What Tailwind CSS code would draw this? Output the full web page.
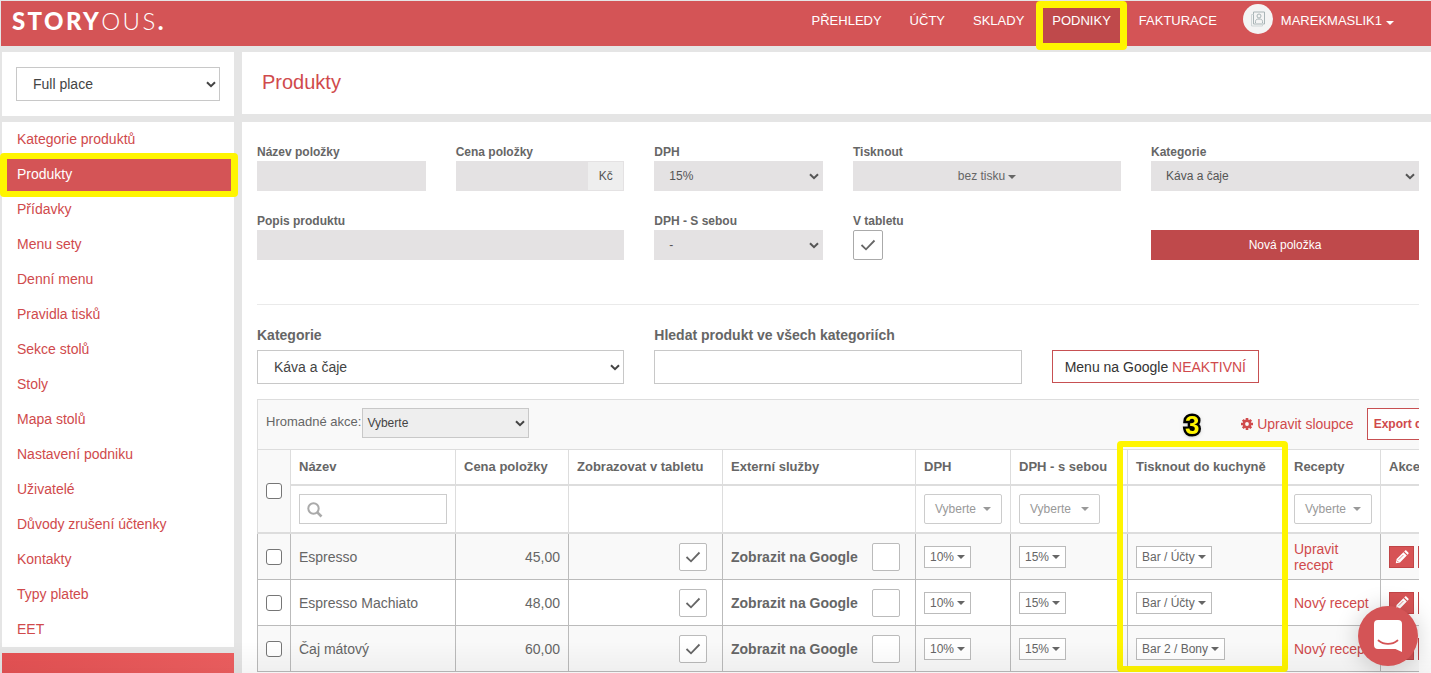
<!DOCTYPE html>
<html lang="cs">
<head>
<meta charset="utf-8">
<meta name="viewport" content="width=device-width, initial-scale=1">
<title>Storyous – Produkty</title>
<script src="https://cdn.jsdelivr.net/npm/@tailwindcss/browser@4"></script>
</head>
<body class="flex h-screen flex-col overflow-hidden bg-[#e5e5e5] font-['Liberation_Sans',Arial,sans-serif] text-[14px] leading-4 text-[#666]">

<svg class="hidden" aria-hidden="true">
  <symbol id="chevron" viewBox="0 0 10 7"><path d="M1 1.2 5 5.2 9 1.2" fill="none" stroke="currentColor" stroke-width="2"/></symbol>
  <symbol id="caret" viewBox="0 0 8 4"><path d="M0 0h8L4 4z" fill="currentColor"/></symbol>
  <symbol id="check" viewBox="0 0 16 12"><path d="M1.5 6 6 10.3 14.5 1.5" fill="none" stroke="currentColor" stroke-width="1.8"/></symbol>
  <symbol id="pencil" viewBox="0 0 14 14"><path d="M.8 13.200l.8-4.200 6.800-6.800 3.400 3.400-6.800 6.800zM9.200 1.400l.7-.7c.5-.5 1.100-.5 1.600 0l1.800 1.800c.5.500.5 1.100 0 1.600l-.7.7z" fill="currentColor"/><path d="M3.600 9.800 8.400 5" stroke="#d75355" stroke-width=".7"/><path d="M2 10.700l1.300 1.300" stroke="#d75355" stroke-width=".8"/></symbol>
</svg>

<header class="mt-px ml-px flex h-[45px] shrink-0 items-start justify-between bg-[#d45456] pr-[37px] pl-[11px] text-white">
  <a href="#" class="mt-1 font-[Lato,sans-serif] text-[24px] leading-8 font-black tracking-widest">STORY<span class="font-light">OUS</span>.</a>
  <nav class="flex items-start text-[13px] leading-4">
    <a href="#" class="px-[14px] pt-[12px]">PŘEHLEDY</a>
    <a href="#" class="px-[14px] pt-[12px]">ÚČTY</a>
    <a href="#" class="px-[14px] pt-[12px]">SKLADY</a>
    <a href="#" aria-current="page" class="relative h-[45px] bg-[#bf494b] px-[14px] pt-[12px]">PODNIKY
      <span class="absolute -inset-x-[2px] top-0 -bottom-1 z-10 rounded-sm border-[7px] border-[#fff500]"></span>
    </a>
    <a href="#" class="px-[14px] pt-[12px]">FAKTURACE</a>
    <button type="button" class="ml-3 flex items-start pt-[3px]">
      <span class="mr-2 flex size-[30px] items-center justify-center rounded-full bg-[#f4f4f4]">
        <svg class="size-4" viewBox="0 0 16 16" fill="none" stroke="#a9b4b6"><path d="M3.500 1h11v12h-11z" stroke-width="1"/><path d="M3.500 3.500H1.500V15h11v-2" stroke="#cfd6d7"/><circle cx="9" cy="5" r="2"/><path d="M5.500 12V10.500c0-1.800 1.300-2.500 3.500-2.500s3.500.7 3.500 2.500V12"/></svg>
      </span>
      <span class="flex items-center gap-1 pt-[9px]">MAREKMASLIK1 <svg class="mt-1 h-1 w-2"><use href="#caret"/></svg></span>
    </button>
  </nav>
</header>

<div class="flex min-h-0 flex-1 gap-2 pt-[6px] pl-[2px]">
  <aside class="flex w-[232px] shrink-0 flex-col">
    <div class="bg-white px-[14px] py-[15px]">
      <div class="relative">
        <select aria-label="Podnik" class="block h-[34px] w-full appearance-none border border-[#c8c8c8] bg-white pl-4 text-[14px] text-[#444]"><option>Full place</option></select>
        <svg class="pointer-events-none absolute top-[14px] right-1 h-[7px] w-[10px] text-[#444]"><use href="#chevron"/></svg>
      </div>
    </div>
    <nav class="mt-[6px] bg-white leading-[35px] text-[#d04a4c]">
      <a href="#" class="block pl-[15px]">Kategorie produktů</a>
      <a href="#" aria-current="page" class="relative block bg-[#d45456] pl-[15px] text-white">Produkty
        <span class="absolute -top-1 -right-1 -bottom-[5px] -left-[2px] z-10 rounded-sm border-x-[7px] border-y-6 border-[#fff500]"></span>
      </a>
      <a href="#" class="block pl-[15px]">Přídavky</a>
      <a href="#" class="block pl-[15px]">Menu sety</a>
      <a href="#" class="block pl-[15px]">Denní menu</a>
      <a href="#" class="block pl-[15px]">Pravidla tisků</a>
      <a href="#" class="block pl-[15px]">Sekce stolů</a>
      <a href="#" class="block pl-[15px]">Stoly</a>
      <a href="#" class="block pl-[15px]">Mapa stolů</a>
      <a href="#" class="block pl-[15px]">Nastavení podniku</a>
      <a href="#" class="block pl-[15px]">Uživatelé</a>
      <a href="#" class="block pl-[15px]">Důvody zrušení účtenky</a>
      <a href="#" class="block pl-[15px]">Kontakty</a>
      <a href="#" class="block pl-[15px]">Typy plateb</a>
      <a href="#" class="block pl-[15px]">EET</a>
    </nav>
    <div class="mt-[6px] flex-1 bg-linear-to-r from-[#e65254] to-[#ee5f60]"></div>
  </aside>

  <main class="flex min-w-0 flex-1 flex-col">
    <div class="bg-white pt-4 pb-[18px] pl-5"><h1 class="text-[20px] leading-7 text-[#d04a4c]">Produkty</h1></div>

    <div class="mt-2 flex-1 bg-white pt-[22px] pr-3 pl-[15px]">
      <form class="grid grid-cols-12 gap-x-[30px] gap-y-[22px] text-[12px]">
        <div class="col-span-2">
          <label for="nazev" class="block pb-px font-bold">Název položky</label>
          <input id="nazev" type="text" class="block h-[30px] w-full bg-[#e4e2e3] px-3">
        </div>
        <div class="col-span-2">
          <label for="cena" class="block pb-px font-bold">Cena položky</label>
          <div class="flex">
            <input id="cena" type="text" class="block h-[30px] w-full min-w-0 bg-[#e4e2e3] px-3">
            <span class="flex h-[30px] w-9 shrink-0 items-center justify-center border border-l-0 border-[#e4e2e3] bg-[#eee] text-[#555]">Kč</span>
          </div>
        </div>
        <div class="col-span-2">
          <label for="dph" class="block pb-px font-bold">DPH</label>
          <div class="relative">
            <select id="dph" class="block h-[30px] w-full appearance-none bg-[#e4e2e3] pl-[15px] text-[#555]"><option>15%</option></select>
            <svg class="pointer-events-none absolute top-3 right-1 h-[7px] w-[10px] text-[#555]"><use href="#chevron"/></svg>
          </div>
        </div>
        <div class="col-span-3">
          <label for="tisk" class="block pb-px font-bold">Tisknout</label>
          <button id="tisk" type="button" class="flex h-[30px] w-full items-center justify-center gap-[3px] bg-[#e4e2e3]">bez tisku <svg class="mt-[2px] h-1 w-2"><use href="#caret"/></svg></button>
        </div>
        <div class="col-span-3">
          <label for="kat1" class="block pb-px font-bold">Kategorie</label>
          <div class="relative">
            <select id="kat1" class="block h-[30px] w-full appearance-none bg-[#e4e2e3] pl-[15px] text-[#555]"><option>Káva a čaje</option></select>
            <svg class="pointer-events-none absolute top-3 right-1 h-[7px] w-[10px] text-[#555]"><use href="#chevron"/></svg>
          </div>
        </div>
        <div class="col-span-4">
          <label for="popis" class="block pb-px font-bold">Popis produktu</label>
          <input id="popis" type="text" class="block h-[30px] w-full bg-[#e4e2e3] px-3">
        </div>
        <div class="col-span-2">
          <label for="dph2" class="block pb-px font-bold">DPH - S sebou</label>
          <div class="relative">
            <select id="dph2" class="block h-[30px] w-full appearance-none bg-[#e4e2e3] pl-[15px] text-[#555]"><option>-</option></select>
            <svg class="pointer-events-none absolute top-3 right-1 h-[7px] w-[10px] text-[#555]"><use href="#chevron"/></svg>
          </div>
        </div>
        <div class="col-span-3">
          <label for="tablet" class="block pb-px font-bold">V tabletu</label>
          <span class="relative block size-[30px]">
            <input id="tablet" type="checkbox" checked class="peer block size-[30px] appearance-none rounded-xs border border-[#aaa] bg-white">
            <svg class="pointer-events-none absolute top-[9px] left-[7px] hidden h-3 w-4 peer-checked:block"><use href="#check"/></svg>
          </span>
        </div>
        <div class="col-span-3 flex items-end">
          <button type="button" class="h-[30px] w-full bg-[#bf494b] text-white">Nová položka</button>
        </div>
      </form>

      <hr class="mt-11 border-[#eaeaea]">

      <div class="mt-5 grid grid-cols-3 gap-x-[30px]">
        <div>
          <label for="kat2" class="block pb-[5px] leading-5 font-bold">Kategorie</label>
          <div class="relative">
            <select id="kat2" class="block h-[34px] w-full appearance-none border border-[#c8c8c8] bg-white pl-4 text-[#444]"><option>Káva a čaje</option></select>
            <svg class="pointer-events-none absolute top-[14px] right-1 h-[7px] w-[10px] text-[#444]"><use href="#chevron"/></svg>
          </div>
        </div>
        <div>
          <label for="hledat" class="block pb-[5px] leading-5 font-bold">Hledat produkt ve všech kategoriích</label>
          <input id="hledat" type="text" class="block h-[34px] w-full border border-[#c8c8c8] bg-white px-3">
        </div>
        <div class="pt-[25px]">
          <button type="button" class="h-[33px] border border-[#c75052] px-3 text-[#333]">Menu na Google <span class="text-[#d04a4c]">NEAKTIVNÍ</span></button>
        </div>
      </div>

      <div class="relative mt-[15px]">
        <div class="overflow-hidden">
          <div class="flex h-[50px] w-[1194px] items-start justify-between border-t border-l border-[#ddd] bg-[#f9f9f9] pt-2 pr-[11px] pl-2">
            <div class="flex">
              <label for="akce" class="pt-[6px] text-[13px]">Hromadné akce:</label>
              <div class="relative ml-px w-[167px]">
                <select id="akce" class="block h-[30px] w-full appearance-none border border-[#c8c8c8] bg-[#eee] pl-1 text-[12px] text-[#444]"><option>Vyberte</option></select>
                <svg class="pointer-events-none absolute top-3 right-1 h-[7px] w-[10px] text-[#444]"><use href="#chevron"/></svg>
              </div>
            </div>
            <div class="flex items-center gap-[13px] text-[#d04a4c]">
              <button type="button" class="flex items-center gap-1">
                <svg class="size-3" viewBox="0 0 12 12"><g stroke="currentColor" stroke-width="2.600"><path d="M6 0v12M0 6h12M1.800 1.800l8.400 8.400M10.200 1.800l-8.400 8.400"/></g><circle cx="6" cy="6" r="4.400" fill="currentColor"/><circle cx="6" cy="6" r="1.900" fill="#f9f9f9"/></svg>
                Upravit sloupce
              </button>
              <button type="button" class="h-8 border border-[#c75052] bg-white px-[6px] text-[12px] font-bold">Export dat</button>
            </div>
          </div>

          <table class="w-[1194px] table-fixed border-separate border-spacing-0 text-left">
            <colgroup>
              <col class="w-[33px]"><col class="w-[165px]"><col class="w-[113px]"><col class="w-[154px]"><col class="w-[193px]"><col class="w-[95px]"><col class="w-[117px]"><col class="w-[158px]"><col class="w-[95px]"><col class="w-[71px]">
            </colgroup>
            <thead class="text-[13px] whitespace-nowrap">
              <tr class="h-[37px] *:border-t *:border-b-2 *:border-l *:border-[#ddd] *:px-2">
                <th rowspan="2" class="bg-[#f9f9f9]"><input type="checkbox" aria-label="Vybrat vše" class="block size-4 appearance-none rounded-[3px] border border-[#767676] bg-white"></th>
                <th>Název</th><th>Cena položky</th><th>Zobrazovat v tabletu</th><th>Externí služby</th><th>DPH</th><th>DPH - s sebou</th><th>Tisknout do kuchyně</th><th>Recepty</th><th>Akce</th>
              </tr>
              <tr class="h-12 text-[12px] text-[#999] *:border-b-2 *:border-l *:border-[#ddd] *:px-2">
                <td>
                  <div class="relative">
                    <input type="search" aria-label="Hledat název" class="block h-[30px] w-full border border-[#ccc] pl-7">
                    <svg class="pointer-events-none absolute top-2 left-2 size-4" viewBox="0 0 16 16" fill="none" stroke="#aaa"><circle cx="6.500" cy="6.500" r="5.200" stroke-width="2"/><path d="M10.300 10.300 14.500 14.500" stroke-width="2.600"/></svg>
                  </div>
                </td>
                <td></td><td></td><td></td>
                <td><button type="button" class="flex h-[30px] items-center gap-[7px] rounded-xs border border-[#ccc] bg-white px-[10px]">Vyberte <svg class="h-1 w-2"><use href="#caret"/></svg></button></td>
                <td><button type="button" class="flex h-[30px] items-center gap-[10px] rounded-xs border border-[#ccc] bg-white px-[10px]">Vyberte <svg class="h-1 w-2"><use href="#caret"/></svg></button></td>
                <td></td>
                <td><button type="button" class="flex h-[30px] items-center gap-[7px] rounded-xs border border-[#ccc] bg-white px-[10px]">Vyberte <svg class="h-1 w-2"><use href="#caret"/></svg></button></td>
                <td></td>
              </tr>
            </thead>
            <tbody>
              <tr class="h-[46px] bg-[#f9f9f9] *:border-b *:border-l *:border-[#bbb] *:px-2">
                <td><input type="checkbox" aria-label="Vybrat Espresso" class="block size-4 appearance-none rounded-[3px] border border-[#767676] bg-white"></td>
                <td>Espresso</td>
                <td class="text-right">45,00</td>
                <td><span class="relative mr-[7px] ml-auto block size-7"><input type="checkbox" checked aria-label="Zobrazovat v tabletu" class="peer block size-7 appearance-none rounded-xs border border-[#bbb] bg-white"><svg class="pointer-events-none absolute top-2 left-[6px] hidden h-3 w-4 peer-checked:block"><use href="#check"/></svg></span></td>
                <td><label class="flex items-center gap-[14px] font-bold">Zobrazit na Google <input type="checkbox" class="size-7 appearance-none rounded-xs border border-[#bbb] bg-white"></label></td>
                <td><button type="button" class="flex h-[22px] items-center gap-[3px] border border-[#bbb] bg-white px-[5px] text-[12px]">10% <svg class="h-1 w-2"><use href="#caret"/></svg></button></td>
                <td><button type="button" class="flex h-[22px] items-center gap-[3px] border border-[#bbb] bg-white px-[5px] text-[12px]">15% <svg class="h-1 w-2"><use href="#caret"/></svg></button></td>
                <td><button type="button" class="flex h-[22px] items-center gap-[3px] border border-[#bbb] bg-white px-[5px] text-[12px]">Bar / Účty <svg class="h-1 w-2"><use href="#caret"/></svg></button></td>
                <td class="text-[#d04a4c]"><a href="#">Upravit<br>recept</a></td>
                <td><div class="flex gap-1"><button type="button" aria-label="Upravit" class="flex h-[22px] w-[25px] shrink-0 items-center justify-center border border-[#c04547] bg-[#d75355] text-white"><svg class="size-[14px]"><use href="#pencil"/></svg></button><button type="button" aria-label="Smazat" class="h-[22px] w-[25px] shrink-0 border border-[#c04547] bg-[#d75355]"></button></div></td>
              </tr>
              <tr class="h-[46px] bg-white *:border-b *:border-l *:border-[#bbb] *:px-2">
                <td><input type="checkbox" aria-label="Vybrat Espresso Machiato" class="block size-4 appearance-none rounded-[3px] border border-[#767676] bg-white"></td>
                <td>Espresso Machiato</td>
                <td class="text-right">48,00</td>
                <td><span class="relative mr-[7px] ml-auto block size-7"><input type="checkbox" checked aria-label="Zobrazovat v tabletu" class="peer block size-7 appearance-none rounded-xs border border-[#bbb] bg-white"><svg class="pointer-events-none absolute top-2 left-[6px] hidden h-3 w-4 peer-checked:block"><use href="#check"/></svg></span></td>
                <td><label class="flex items-center gap-[14px] font-bold">Zobrazit na Google <input type="checkbox" class="size-7 appearance-none rounded-xs border border-[#bbb] bg-white"></label></td>
                <td><button type="button" class="flex h-[22px] items-center gap-[3px] border border-[#bbb] bg-white px-[5px] text-[12px]">10% <svg class="h-1 w-2"><use href="#caret"/></svg></button></td>
                <td><button type="button" class="flex h-[22px] items-center gap-[3px] border border-[#bbb] bg-white px-[5px] text-[12px]">15% <svg class="h-1 w-2"><use href="#caret"/></svg></button></td>
                <td><button type="button" class="flex h-[22px] items-center gap-[3px] border border-[#bbb] bg-white px-[5px] text-[12px]">Bar / Účty <svg class="h-1 w-2"><use href="#caret"/></svg></button></td>
                <td class="text-[#d04a4c]"><a href="#">Nový recept</a></td>
                <td><div class="flex gap-1"><button type="button" aria-label="Upravit" class="flex h-[22px] w-[25px] shrink-0 items-center justify-center border border-[#c04547] bg-[#d75355] text-white"><svg class="size-[14px]"><use href="#pencil"/></svg></button><button type="button" aria-label="Smazat" class="h-[22px] w-[25px] shrink-0 border border-[#c04547] bg-[#d75355]"></button></div></td>
              </tr>
              <tr class="h-[46px] bg-[#f9f9f9] *:border-b *:border-l *:border-[#bbb] *:px-2">
                <td><input type="checkbox" aria-label="Vybrat Čaj mátový" class="block size-4 appearance-none rounded-[3px] border border-[#767676] bg-white"></td>
                <td>Čaj mátový</td>
                <td class="text-right">60,00</td>
                <td><span class="relative mr-[7px] ml-auto block size-7"><input type="checkbox" checked aria-label="Zobrazovat v tabletu" class="peer block size-7 appearance-none rounded-xs border border-[#bbb] bg-white"><svg class="pointer-events-none absolute top-2 left-[6px] hidden h-3 w-4 peer-checked:block"><use href="#check"/></svg></span></td>
                <td><label class="flex items-center gap-[14px] font-bold">Zobrazit na Google <input type="checkbox" class="size-7 appearance-none rounded-xs border border-[#bbb] bg-white"></label></td>
                <td><button type="button" class="flex h-[22px] items-center gap-[3px] border border-[#bbb] bg-white px-[5px] text-[12px]">10% <svg class="h-1 w-2"><use href="#caret"/></svg></button></td>
                <td><button type="button" class="flex h-[22px] items-center gap-[3px] border border-[#bbb] bg-white px-[5px] text-[12px]">15% <svg class="h-1 w-2"><use href="#caret"/></svg></button></td>
                <td><button type="button" class="flex h-[22px] items-center gap-[3px] border border-[#bbb] bg-white px-[5px] text-[12px]">Bar 2 / Bony <svg class="h-1 w-2"><use href="#caret"/></svg></button></td>
                <td class="text-[#d04a4c]"><a href="#">Nový recept</a></td>
                <td><div class="flex gap-1"><button type="button" aria-label="Upravit" class="flex h-[22px] w-[25px] shrink-0 items-center justify-center border border-[#c04547] bg-[#d75355] text-white"><svg class="size-[14px]"><use href="#pencil"/></svg></button><button type="button" aria-label="Smazat" class="h-[22px] w-[25px] shrink-0 border border-[#c04547] bg-[#d75355]"></button></div></td>
              </tr>
            </tbody>
          </table>
        </div>
        <!-- highlighted step 3: kitchen printing column -->
        <div class="pointer-events-none absolute top-[42px] bottom-0 left-[860px] w-[171px] rounded-sm border-6 border-[#fff500]"></div>
        <span class="pointer-events-none absolute top-3 left-[928px] text-[26px] leading-7 font-bold text-[#fff500] [-webkit-text-stroke:5px_black] [paint-order:stroke_fill] drop-shadow">3</span>
      </div>
    </div>
  </main>
</div>

<div class="pointer-events-none fixed inset-x-0 bottom-0 h-8 bg-linear-to-b from-transparent to-black/4"></div>
<button type="button" aria-label="Chat" class="fixed right-[13px] bottom-[7px] flex size-[60px] items-center justify-center rounded-full bg-[#d45456] shadow-[0_2px_24px_rgba(0,0,0,0.2)]">
  <svg class="h-8 w-7" viewBox="0 0 28 32"><path d="M4 0h20a4 4 0 0 1 4 4v28l-6.500-3H4a4 4 0 0 1-4-4V4a4 4 0 0 1 4-4z" fill="#fff"/><path d="M4.500 20.500c5.500 4.500 13.500 4.500 19 0" fill="none" stroke="#d45456" stroke-width="1.800" stroke-linecap="round"/></svg>
</button>
</body>
</html>
